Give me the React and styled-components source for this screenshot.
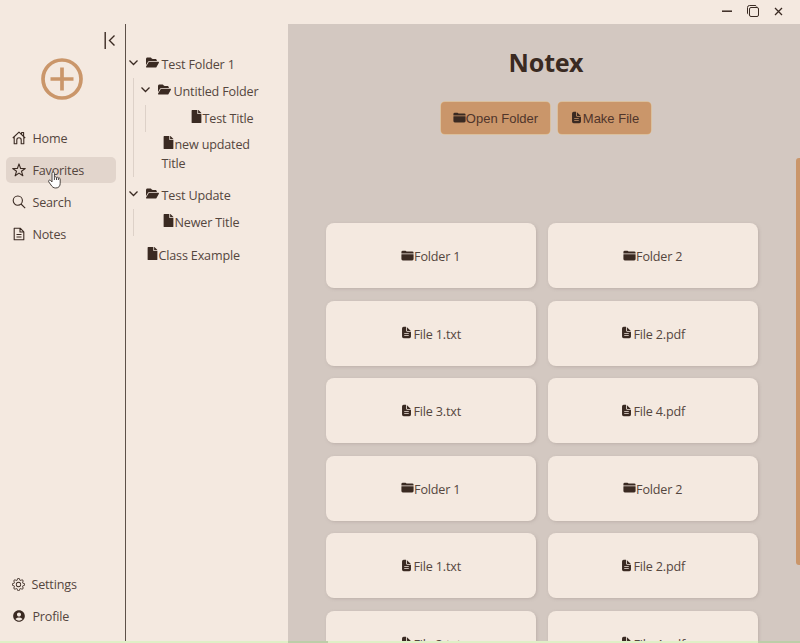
import React from 'react';
import styled, { createGlobalStyle } from 'styled-components';
import { IoFolder, IoDocumentText } from 'react-icons/io5';
import { FaFile } from 'react-icons/fa';
import { FaFolderOpen } from 'react-icons/fa6';
import { BsGear } from 'react-icons/bs';
import { MdAccountCircle } from 'react-icons/md';

const ink = '#3a2a22';
const text = '#54463e';
const cream = '#f4e9e0';
const taupe = '#d3c8c1';
const caramel = '#ca966a';

const Global = createGlobalStyle`
  * { box-sizing: border-box; }
  body { margin: 0; overflow: hidden; }
  svg { display: block; flex: none; }
`;

const Window = styled.div`
  width: 800px;
  height: 643px;
  display: grid;
  grid-template-rows: 24px 617px 2px;
  overflow: hidden;
  background: ${cream};
  color: ${text};
  font: 12.6px/19px 'Open Sans', 'Noto Sans', sans-serif;
  letter-spacing: -.17px;
`;

const TitleBar = styled.header`
  display: flex;
  justify-content: flex-end;
  align-items: center;
  gap: 14px;
  padding: 0 16px 2px 0;
  color: ${ink};
`;

const Body = styled.div`
  display: grid;
  grid-template-columns: 126px 161.5px 1fr;
  min-height: 0;
`;

const BottomEdge = styled.div`
  background: linear-gradient(90deg, #dff0c6 0 36%, #bccea8 36% 41%, #dff0c6 41% 94.7%, #bccea8 94.7%);
`;

const Sidebar = styled.nav`
  display: flex;
  flex-direction: column;
  border-right: 1px solid #5d5149;
  padding: 8px 9px 5px 6px;
`;

const Collapse = styled.div`
  align-self: flex-end;
  height: 17px;
`;

const AddButton = styled.div`
  align-self: center;
  width: 42px;
  height: 42px;
  margin: 9px 0 25px 1px;
`;

const NavItem = styled.div`
  position: relative;
  display: flex;
  align-items: center;
  gap: 6px;
  height: 26px;
  margin-bottom: 6.2px;
  padding-left: 6.4px;
  border-radius: 5px;
  color: ${text};
  background: ${({ $active }) => ($active ? '#e2d5cc' : 'transparent')};
`;

const NavIcon = styled.span`
  display: flex;
  margin-top: -1px;
  color: ${ink};
`;

const Spacer = styled.div`flex: 1;`;

const Pointer = styled.svg`
  position: absolute;
  left: 42px;
  top: 14px;
`;

const Tree = styled.aside`
  padding-top: 27px;
  color: ${text};
`;

const Branch = styled.div`
  margin-left: ${({ $indent }) => $indent || 0}px;
  margin-bottom: ${({ $gap }) => $gap || 0}px;
`;

const FolderRow = styled.div`
  display: flex;
  align-items: center;
  height: 27px;
  padding-left: 2px;
  white-space: nowrap;
  svg { color: ${ink}; margin-top: -4px; }
  svg + svg { margin: -4px 3px 0 6.5px; }
`;

const Children = styled.div`
  margin-left: 7px;
  border-left: 1px solid #ddd1c8;
`;

const FileRow = styled.div`
  padding: ${({ $tight }) => ($tight ? 3 : 4)}px 0 4px ${({ $inset }) => $inset}px;
  width: ${({ $width }) => ($width ? `${$width}px` : 'auto')};
  svg { display: inline-block; color: ${ink}; vertical-align: 0; }
`;

const Main = styled.main`
  display: grid;
  grid-template-columns: 1fr 4px;
  background: ${taupe};
  min-height: 0;
  overflow: hidden;
`;

const Content = styled.section`
  min-width: 0;
  padding-left: 38.5px;
`;

const Title = styled.h1`
  width: 440px;
  margin: 23px 0 24px;
  text-align: center;
  color: ${ink};
  font: 700 25px/31px 'Noto Sans', sans-serif;
`;

const Actions = styled.div`
  display: flex;
  gap: 8px;
  width: 440px;
  padding-left: 115px;
  margin-bottom: 89px;
`;

const Action = styled.button`
  display: flex;
  align-items: center;
  justify-content: center;
  width: ${({ $width }) => $width}px;
  height: 32px;
  padding: 2px 0 0;
  border: 0;
  border-radius: 4px;
  box-shadow: 0 0 0 .5px #e2b77c;
  background: ${caramel};
  color: #50352a;
  font: 13px/18px 'Liberation Sans', sans-serif;
  svg { color: ${ink}; margin-top: -4px; }
`;

const Cards = styled.div`
  display: grid;
  grid-template-columns: 209.5px 209.5px;
  grid-auto-rows: 65px;
  gap: 12.5px;
`;

const Card = styled.div`
  display: flex;
  align-items: center;
  justify-content: center;
  padding-top: 2px;
  border-radius: 8px;
  background: ${cream};
  box-shadow: 1px 1px 3px #a99c9580;
  svg { color: ${ink}; margin-top: -3px; }
`;

const Scrollbar = styled.div`
  margin-top: 134px;
  height: 407px;
  border-radius: 3px 0 0 3px;
  background: ${caramel};
`;

const Chevron = () => (
  <svg width="11" height="10" viewBox="0 0 11 10" fill="none" stroke="currentColor" strokeWidth="1.3">
    <path d="M1.5 2.5 5.5 6.5l4-4" />
  </svg>
);

const Folder = ({ name }) => (
  <FolderRow><Chevron /><FaFolderOpen size={13} />{name}</FolderRow>
);

const linePaths = {
  home: 'M.8 7 7 1.2 13.2 7M2.2 6v6.8h2.6V9a2.2 2.2 0 0 1 4.4 0v3.8h2.6V6M9.6 3.2V1.5h2v3.6',
  star: 'm7 .9 1.6 4.6h4.7L9.5 8.3l1.4 4.5L7 10.1l-3.9 2.7 1.4-4.5L.7 5.5h4.7Z',
  search: 'M10.4 5.6a4.6 4.6 0 1 1-9.2 0 4.6 4.6 0 0 1 9.2 0ZM9 9l4.2 4.2',
  notes: 'M2.2 1.2h6l3.6 3.6v8H2.2ZM8 1.4V5h3.6M4.5 7.5h5M4.5 10h5',
};

const LineIcon = ({ name }) => (
  <svg width="14" height="14" viewBox="0 0 14 14" fill="none" stroke="currentColor" strokeWidth="1.1" strokeLinejoin="round">
    <path d={linePaths[name]} />
  </svg>
);

const HandPointer = () => (
  <Pointer width="13" height="18" viewBox="0 0 13 18" fill="#fff" stroke="#4b4541" strokeWidth="1" strokeLinejoin="round">
    <path d="M4 10V2.3C4 .4 6.4.4 6.4 2.3v4c.5-.8 2-.7 2.1.3.5-.7 1.8-.4 1.9.5.7-.4 1.8 0 1.8 1v4.2c0 2.6-1.3 4.7-4.4 4.7-2.5 0-3.7-1.2-4.8-3L.7 10.8C0 9.5 1.5 8.5 2.5 9.4L4 11Z" />
    <path d="M6.4 6.3V9M8.5 6.6V9M10.4 7.1V9" />
  </Pointer>
);

const names = ['Folder 1', 'Folder 2', 'File 1.txt', 'File 2.pdf', 'File 3.txt', 'File 4.pdf'];
const cards = [...names, ...names];

export default function App() {
  return (
    <Window>
      <Global />
      <TitleBar>
        <svg width="12" height="12" viewBox="0 0 12 12" stroke="currentColor" strokeWidth="1.5"><path d="M1 6.2h10" /></svg>
        <svg width="12" height="12" viewBox="0 0 12 12" fill="none" stroke="currentColor"><rect x="2.5" y="2.5" width="9" height="9" rx="1.5" /><path d="M.9 9.2A2 2 0 0 1 .5 8V2.5a2 2 0 0 1 2-2H8a2 2 0 0 1 1.7 1" /></svg>
        <svg width="11" height="12" viewBox="0 0 11 12" stroke="currentColor" strokeWidth="1.3"><path d="m2 3 7 7M9 3l-7 7" /></svg>
      </TitleBar>
      <Body>
        <Sidebar>
          <Collapse>
            <svg width="12" height="17" viewBox="0 0 12 17" fill="none" stroke={ink} strokeWidth="1.4"><path d="M1.2 0v17M10.5 3.5l-5 5 5 5" /></svg>
          </Collapse>
          <AddButton>
            <svg width="42" height="42" viewBox="0 0 42 42" fill="none" stroke={caramel} strokeWidth="3.7"><circle cx="21" cy="21" r="19" /><path d="M9.5 21h23M21 9.5v23" /></svg>
          </AddButton>
          <NavItem><NavIcon><LineIcon name="home" /></NavIcon>Home</NavItem>
          <NavItem $active><NavIcon><LineIcon name="star" /></NavIcon>Favorites<HandPointer /></NavItem>
          <NavItem><NavIcon><LineIcon name="search" /></NavIcon>Search</NavItem>
          <NavItem><NavIcon><LineIcon name="notes" /></NavIcon>Notes</NavItem>
          <Spacer />
          <NavItem><NavIcon><BsGear size={13} /></NavIcon>Settings</NavItem>
          <NavItem><NavIcon><MdAccountCircle size={14} /></NavIcon>Profile</NavItem>
        </Sidebar>
        <Tree>
          <Branch $gap={5}>
            <Folder name="Test Folder 1" />
            <Children>
              <Branch $indent={4}>
                <Folder name="Untitled Folder" />
                <Children><FileRow $inset={43.5}><FaFile size={13} />Test Title</FileRow></Children>
              </Branch>
              <FileRow $tight $inset={27.5} $width={120}><FaFile size={13} />new updated Title</FileRow>
            </Children>
          </Branch>
          <Branch $gap={6}>
            <Folder name="Test Update" />
            <Children><FileRow $inset={27.5}><FaFile size={13} />Newer Title</FileRow></Children>
          </Branch>
          <FileRow $inset={19.5}><FaFile size={13} />Class Example</FileRow>
        </Tree>
        <Main>
          <Content>
            <Title>Notex</Title>
            <Actions>
              <Action $width={109}><IoFolder size={13} />Open Folder</Action>
              <Action $width={93}><IoDocumentText size={13} />Make File</Action>
            </Actions>
            <Cards>
              {cards.map((name, i) => (
                <Card key={i}>{name.startsWith('File') ? <IoDocumentText size={13} /> : <IoFolder size={13} />}{name}</Card>
              ))}
            </Cards>
          </Content>
          <Scrollbar />
        </Main>
      </Body>
      <BottomEdge />
    </Window>
  );
}
